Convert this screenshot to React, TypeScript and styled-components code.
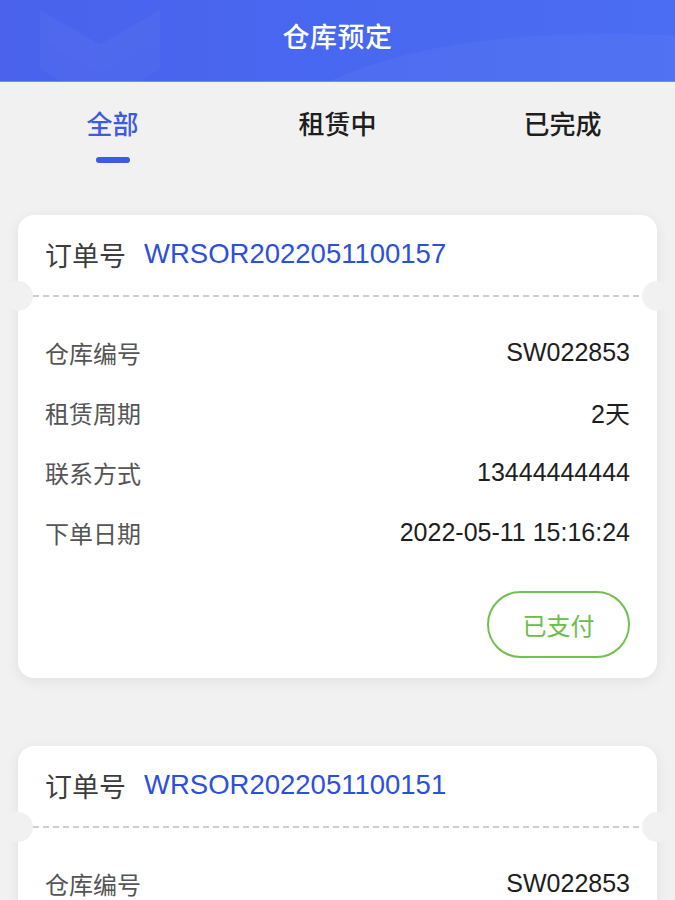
import styled, { createGlobalStyle } from "styled-components";
import { useState } from "react";

interface Order {
  orderNo: string;
  warehouseNo: string;
  period: string;
  contact: string;
  createdAt: string;
  status: string;
}

const orders: Order[] = [
  {
    orderNo: "WRSOR2022051100157",
    warehouseNo: "SW022853",
    period: "2天",
    contact: "13444444444",
    createdAt: "2022-05-11 15:16:24",
    status: "已支付",
  },
  {
    orderNo: "WRSOR2022051100151",
    warehouseNo: "SW022853",
    period: "2天",
    contact: "13444444444",
    createdAt: "2022-05-11 15:10:02",
    status: "已支付",
  },
];

const tabs = ["全部", "租赁中", "已完成"];

const App = () => {
  const [activeTab, setActiveTab] = useState(0);

  return (
    <Page>
      <GlobalStyle />
      <Header>
        <HeaderDecor viewBox="0 0 675 82" preserveAspectRatio="none">
          <path d="M40 10 L100 45 L160 10 L160 40 L100 75 L40 40 Z" fill="rgba(255,255,255,0.035)" />
          <path d="M40 40 L100 75 L160 40 L160 70 L100 105 L40 70 Z" fill="rgba(255,255,255,0.03)" />
          <path d="M330 82 C 420 40, 540 30, 675 36 L675 82 Z" fill="rgba(255,255,255,0.035)" />
        </HeaderDecor>
        <Title>仓库预定</Title>
      </Header>

      <Tabs>
        {tabs.map((t, i) => (
          <Tab key={t} $active={i === activeTab} onClick={() => setActiveTab(i)}>
            {t}
            <Indicator $active={i === activeTab} />
          </Tab>
        ))}
      </Tabs>

      <List>
        {orders.map((o) => (
          <Card key={o.orderNo}>
            <CardHeader>
              <OrderLabel>订单号</OrderLabel>
              <OrderNo>{o.orderNo}</OrderNo>
            </CardHeader>
            <Divider />
            <CardBody>
              <Row>
                <Label>仓库编号</Label>
                <Value>{o.warehouseNo}</Value>
              </Row>
              <Row>
                <Label>租赁周期</Label>
                <Value>{o.period}</Value>
              </Row>
              <Row>
                <Label>联系方式</Label>
                <Value>{o.contact}</Value>
              </Row>
              <Row>
                <Label>下单日期</Label>
                <Value>{o.createdAt}</Value>
              </Row>
              <Actions>
                <StatusButton>{o.status}</StatusButton>
              </Actions>
            </CardBody>
          </Card>
        ))}
      </List>
    </Page>
  );
};
export default App;

const GlobalStyle = createGlobalStyle`
  html, body {
    margin: 0;
    padding: 0;
    background: #f1f1f1;
    font-family: "Liberation Sans", "Noto Sans CJK SC", sans-serif;
  }
`;

const Page = styled.div`
  width: 675px;
  height: 900px;
  background: #f1f1f1;
  overflow: hidden;
`;

const Header = styled.div`
  position: relative;
  height: 82px;
  background: linear-gradient(90deg, #4a62ec 0%, #4868f0 55%, #4b6df3 100%);
  border-bottom: 1px solid #6f8cf6;
  box-sizing: border-box;
  display: flex;
  align-items: center;
  justify-content: center;
  overflow: hidden;
`;

const HeaderDecor = styled.svg`
  position: absolute;
  inset: 0;
  width: 100%;
  height: 100%;
`;

const Title = styled.h1`
  position: relative;
  margin: 0 0 10px;
  color: #fff;
  font-size: 27px;
  font-weight: 500;
  letter-spacing: 0.5px;
`;

const Tabs = styled.div`
  display: grid;
  grid-template-columns: repeat(3, 1fr);
`;

const Tab = styled.div<{ $active: boolean }>`
  display: flex;
  flex-direction: column;
  align-items: center;
  padding-top: 28px;
  font-size: 26px;
  line-height: 30px;
  font-weight: 500;
  color: ${(p) => (p.$active ? "#3b5be4" : "#1e1e1e")};
  cursor: pointer;
`;

const Indicator = styled.span<{ $active: boolean }>`
  margin-top: 17px;
  width: 34px;
  height: 6px;
  border-radius: 3px;
  background: ${(p) => (p.$active ? "#3b5be4" : "transparent")};
`;

const List = styled.div`
  display: flex;
  flex-direction: column;
  gap: 68px;
  padding: 52px 18px 0;
`;

const Card = styled.div`
  background: #fff;
  border-radius: 16px;
  box-shadow: 0 3px 14px rgba(0, 0, 0, 0.07);
`;

const CardHeader = styled.div`
  display: flex;
  align-items: center;
  gap: 18px;
  height: 78px;
  padding: 0 27px 2px;
`;

const OrderLabel = styled.span`
  font-size: 27px;
  color: #3c3c3c;
`;

const OrderNo = styled.span`
  font-size: 27.5px;
  color: #2d4fdf;
`;

const Divider = styled.div`
  position: relative;
  height: 2px;
  margin: 0 15px;
  background: repeating-linear-gradient(90deg, #cfcfcf 0 6px, transparent 6px 10px);

  &::before,
  &::after {
    content: "";
    position: absolute;
    top: -14px;
    width: 30px;
    height: 30px;
    border-radius: 50%;
    background: #f1f1f1;
  }
  &::before {
    left: -30px;
  }
  &::after {
    right: -30px;
  }
`;

const CardBody = styled.div`
  padding: 25px 27px 20px;
`;

const Row = styled.div`
  display: flex;
  justify-content: space-between;
  align-items: center;
  height: 60px;
`;

const Label = styled.span`
  font-size: 24px;
  color: #555;
`;

const Value = styled.span`
  font-size: 25px;
  color: #1e1e1e;
`;

const Actions = styled.div`
  display: flex;
  justify-content: flex-end;
  margin-top: 29px;
`;

const StatusButton = styled.button`
  width: 143px;
  height: 67px;
  border: 2px solid #72c04f;
  border-radius: 34px;
  background: #fff;
  color: #6cbd48;
  font-family: inherit;
  font-size: 24px;
  cursor: pointer;
`;
